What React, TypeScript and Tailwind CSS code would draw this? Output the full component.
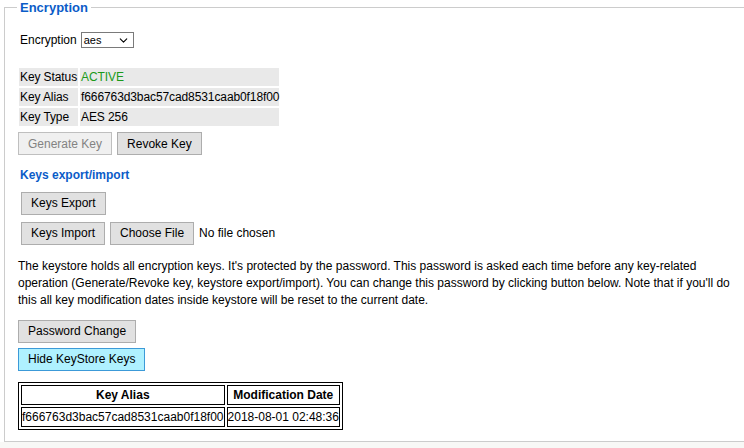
import { ChevronDown } from "lucide-react";

const font = { fontFamily: '"Liberation Sans", Arial, sans-serif' };

const Btn = ({
  children,
  disabled,
  active,
}: {
  children: React.ReactNode;
  disabled?: boolean;
  active?: boolean;
}) => {
  let cls = "border-[#adadad] bg-[#e1e1e1] text-black";
  if (disabled) cls = "border-[#bfbfbf] bg-[#f0f0f0] text-[#838383]";
  if (active) cls = "border-[#3c9ad8] bg-[#aff1ff] text-black";
  return (
    <button className={`h-[23px] whitespace-nowrap border px-[9px] text-[12px] leading-none ${cls}`}>
      {children}
    </button>
  );
};

export default function App() {
  const info = [
    { label: "Key Status", value: "ACTIVE", green: true },
    { label: "Key Alias", value: "f666763d3bac57cad8531caab0f18f00" },
    { label: "Key Type", value: "AES 256" },
  ];
  return (
    <div className="h-[448px] w-[744px] overflow-hidden bg-[#f8f8f6] text-black" style={font}>
      <div className="h-[442px] bg-white pl-1">
        <fieldset className="h-[442px] w-[760px] border border-[#cccccc] pl-[12px]">
          <legend className="px-[3px] text-[13px] font-bold leading-[15px] text-[#0b5cc8]">Encryption</legend>

          <div className="mt-[16px] flex items-center gap-[4px] pl-[3px] text-[12px]">
            <span>Encryption</span>
            <span className="flex h-[16px] w-[53px] items-center justify-between border border-[#7a7a7a] pl-[2px] pr-[3px] text-[11px]">
              aes
              <ChevronDown size={13} strokeWidth={2} />
            </span>
          </div>

          <table className="mt-[17px] border-separate border-spacing-[2px] text-[12px] tracking-[-0.1px]">
            <tbody>
              {info.map((r) => (
                <tr key={r.label}>
                  <td className="h-[18px] whitespace-nowrap bg-[#e9e9e9] pl-[1px] pr-[1px]">{r.label}</td>
                  <td className="w-[198px] whitespace-nowrap bg-[#e9e9e9] pl-[1px]">
                    <span className={r.green ? "text-[#1a9a1a]" : ""}>{r.value}</span>
                  </td>
                </tr>
              ))}
            </tbody>
          </table>

          <div className="mt-[4px] flex gap-[5px] pl-[1px]">
            <Btn disabled>Generate Key</Btn>
            <Btn>Revoke Key</Btn>
          </div>

          <div className="mt-[11px] pl-[3px] text-[12px] font-bold text-[#0b5cc8]">Keys export/import</div>

          <div className="mt-[6px] pl-[4px]">
            <Btn>Keys Export</Btn>
          </div>
          <div className="mt-[7px] flex items-center gap-[5px] pl-[4px] text-[12px]">
            <Btn>Keys Import</Btn>
            <Btn>Choose File</Btn>
            <span>No file chosen</span>
          </div>

          <p className="mt-[13px] w-[725px] pl-[1px] text-[12px] leading-[17px]">
            The keystore holds all encryption keys. It's protected by the password. This password is asked each time
            before any key-related operation (Generate/Revoke key, keystore export/import). You can change this password
            by clicking button below. Note that if you'll do this all key modification dates inside keystore will be reset
            to the current date.
          </p>

          <div className="mt-[11px] flex flex-col items-start gap-[5px] pl-[1px]">
            <Btn>Password Change</Btn>
            <Btn active>Hide KeyStore Keys</Btn>
          </div>

          <table className="mt-[11px] ml-[1px] border-separate border-spacing-[2px] border border-black text-[12px]">
            <thead>
              <tr>
                <th className="h-[19px] w-[202px] border border-black font-bold">Key Alias</th>
                <th className="border border-black px-[1px] font-bold">Modification Date</th>
              </tr>
            </thead>
            <tbody>
              <tr>
                <td className="h-[19px] whitespace-nowrap border border-black">f666763d3bac57cad8531caab0f18f00</td>
                <td className="whitespace-nowrap border border-black">2018-08-01 02:48:36</td>
              </tr>
            </tbody>
          </table>
        </fieldset>
      </div>
    </div>
  );
}
